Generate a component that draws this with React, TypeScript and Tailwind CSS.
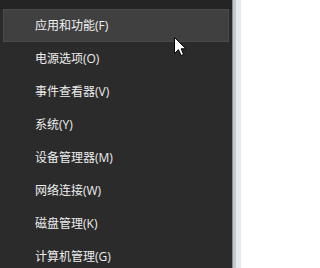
const items = [
  '应用和功能(F)',
  '电源选项(O)',
  '事件查看器(V)',
  '系统(Y)',
  '设备管理器(M)',
  '网络连接(W)',
  '磁盘管理(K)',
  '计算机管理(G)',
]

export default function App() {
  return (
    <div className="relative flex h-[268px] w-[241px] overflow-hidden font-['Open_Sans','Noto_Sans_CJK_SC',sans-serif]">
      <div className="flex w-[232px] flex-col bg-[#2b2b2b]">
        <div className="h-[9px] shrink-0 bg-[#242424]" />
        {items.map((label, i) => (
          <div
            key={label}
            className={
              i === 0
                ? 'mx-[3px] flex h-[33px] shrink-0 items-center border border-[#4a4a4a] bg-[#404040] pl-[31px] text-[12px] text-[#f2f2f2]'
                : 'mx-[3px] flex h-[33px] shrink-0 items-center border border-transparent pl-[31px] text-[12px] text-[#ededed]'
            }
          >
            {label}
          </div>
        ))}
      </div>
      <div className="w-px bg-[#8a8a8a]" />
      <div className="w-[3px] bg-[#c4c8cb]" />
      <div className="flex-1 bg-[#e4eaec]" />

      {/* mouse pointer over the first row */}
      <svg className="absolute left-[174px] top-[37px]" width="13" height="20" viewBox="0 0 13 20">
        <path
          d="M0.5 0.5 L0.5 16.5 L4.5 12.7 L7 18.5 L9.6 17.4 L7.2 11.8 L12 11.8 Z"
          fill="#ffffff"
          stroke="#000000"
          strokeWidth="1"
          strokeLinejoin="miter"
        />
      </svg>
    </div>
  )
}
